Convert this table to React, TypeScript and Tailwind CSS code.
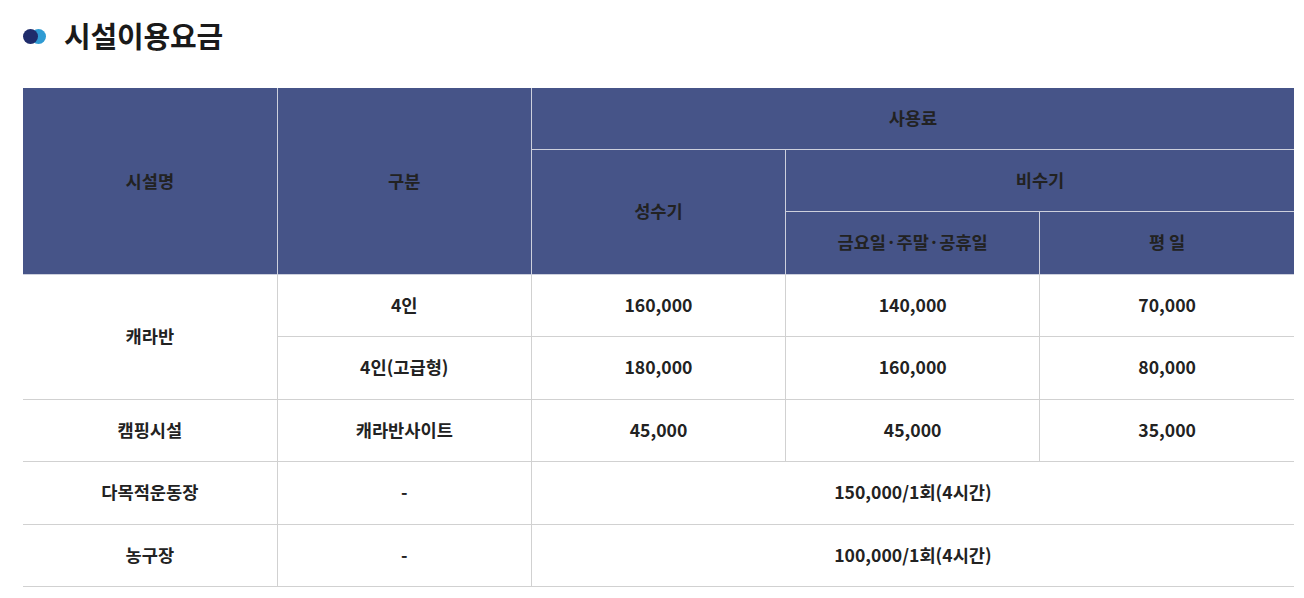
const th = "border-r border-b border-[#cdd0dd] font-bold text-[17.6px] text-[#222]";
const td = "border-r border-b border-[#d1d1d1] font-bold text-[17.6px] text-[#222]";

export default function App() {
  return (
    <div
      className="min-h-screen bg-white pl-[23px] pr-[10px] pt-[18px]"
      style={{ fontFamily: '"Noto Sans CJK KR", "Noto Sans", sans-serif' }}
    >
      <div className="flex items-center gap-[16px] h-[36px]">
        <div className="relative w-[25px] h-[16px]">
          <span className="absolute left-[8px] top-[1px] w-[15px] h-[15px] rounded-full bg-[#2f9bd3]" />
          <span className="absolute left-0 top-[1px] w-[15px] h-[15px] rounded-full bg-[#1f2c6b]" />
        </div>
        <h1 className="text-[29px] font-bold text-[#1a1a1a] tracking-[-0.2px]">시설이용요금</h1>
      </div>

      <table className="mt-[34px] w-full table-fixed border-collapse text-center">
        <thead className="bg-[#465488]">
          <tr className="h-[61px]">
            <th rowSpan={3} className={th}>시설명</th>
            <th rowSpan={3} className={th}>구분</th>
            <th colSpan={3} className={th + " border-r-0"}>사용료</th>
          </tr>
          <tr className="h-[62px]">
            <th rowSpan={2} className={th}>성수기</th>
            <th colSpan={2} className={th + " border-r-0"}>비수기</th>
          </tr>
          <tr className="h-[63px]">
            <th className={th}>금요일·주말·공휴일</th>
            <th className={th + " border-r-0"}>평 일</th>
          </tr>
        </thead>
        <tbody>
          <tr className="h-[62px]">
            <td rowSpan={2} className={td}>캐라반</td>
            <td className={td}>4인</td>
            <td className={td}>160,000</td>
            <td className={td}>140,000</td>
            <td className={td + " border-r-0"}>70,000</td>
          </tr>
          <tr className="h-[63px]">
            <td className={td}>4인(고급형)</td>
            <td className={td}>180,000</td>
            <td className={td}>160,000</td>
            <td className={td + " border-r-0"}>80,000</td>
          </tr>
          <tr className="h-[62px]">
            <td className={td}>캠핑시설</td>
            <td className={td}>캐라반사이트</td>
            <td className={td}>45,000</td>
            <td className={td}>45,000</td>
            <td className={td + " border-r-0"}>35,000</td>
          </tr>
          <tr className="h-[63px]">
            <td className={td}>다목적운동장</td>
            <td className={td}>-</td>
            <td colSpan={3} className={td + " border-r-0"}>150,000/1회(4시간)</td>
          </tr>
          <tr className="h-[62px]">
            <td className={td}>농구장</td>
            <td className={td}>-</td>
            <td colSpan={3} className={td + " border-r-0"}>100,000/1회(4시간)</td>
          </tr>
        </tbody>
      </table>
    </div>
  );
}
